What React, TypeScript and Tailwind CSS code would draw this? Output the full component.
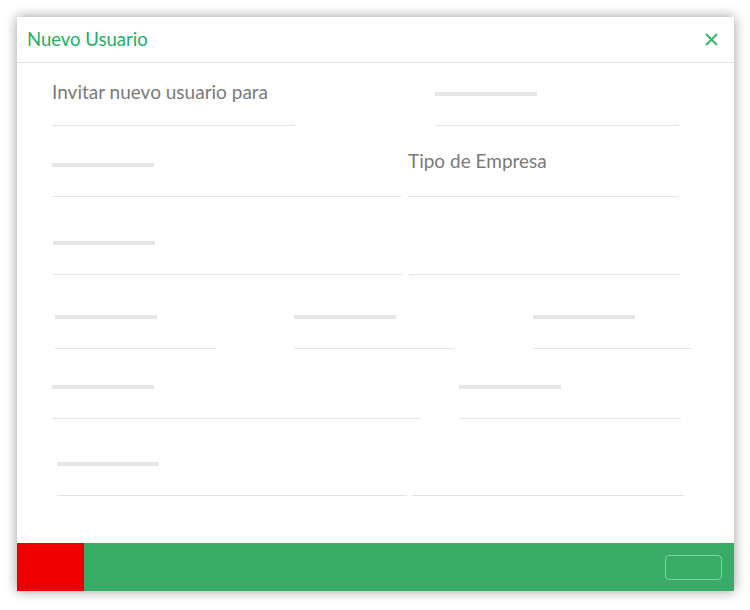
import React from "react";

type FieldProps = {
  width: string;
  label?: string;
  bar?: boolean;
  labelShift?: string;
};

function Field({ width, label, bar = true, labelShift = "" }: FieldProps) {
  return (
    <div className={`flex flex-col ${width}`}>
      <div className="flex h-[32px] items-center">
        {label ? (
          <span className={`text-[19px] text-[#7a7a7a] ${labelShift}`}>{label}</span>
        ) : bar ? (
          <div className="h-[4px] w-[102px] bg-[#e6e6e6]" />
        ) : null}
      </div>
      <div className="mt-[15px] h-px w-full bg-[#e3e3e3]" />
    </div>
  );
}

export default function App() {
  return (
    <main
      className="h-[610px] w-[750px] bg-white pl-[17px] pt-[17px]"
      style={{ fontFamily: "Lato, 'Open Sans', sans-serif" }}
    >
      <div className="flex h-[574px] w-[717px] flex-col bg-white shadow-[0_0_12px_rgba(0,0,0,0.4)]">
        <header className="flex h-[46px] items-center justify-between border-b border-[#e2e2e2] pl-[10px] pr-[16px]">
          <h2 className="text-[18.5px] text-[#1fae62]">Nuevo Usuario</h2>
          <button type="button" className="text-[#3cb371]">
            <svg width="13" height="13" viewBox="0 0 13 13">
              <path d="M1 1L12 12M12 1L1 12" stroke="currentColor" strokeWidth="2" />
            </svg>
          </button>
        </header>

        <section className="flex flex-1 flex-col pt-[15px]">
          <div className="flex pl-[35px]">
            <Field
              width="w-[243px]"
              label="Invitar nuevo usuario para"
              labelShift="-translate-y-[2px]"
            />
            <div className="ml-[140px]">
              <Field width="w-[244px]" />
            </div>
          </div>

          <div className="mt-[23px] flex pl-[35px]">
            <Field width="w-[349px]" />
            <div className="ml-[7px]">
              <Field
                width="w-[271px]"
                label="Tipo de Empresa"
                labelShift="-translate-y-[4px]"
              />
            </div>
          </div>

          <div className="mt-[30px] flex pl-[36px]">
            <Field width="w-[349px]" />
            <div className="ml-[7px]">
              <Field width="w-[271px]" bar={false} />
            </div>
          </div>

          <div className="mt-[26px] flex gap-[78px] pl-[38px]">
            <Field width="w-[161px]" />
            <Field width="w-[161px]" />
            <Field width="w-[159px]" />
          </div>

          <div className="mt-[22px] flex pl-[35px]">
            <Field width="w-[369px]" />
            <div className="ml-[38px]">
              <Field width="w-[222px]" />
            </div>
          </div>

          <div className="mt-[29px] flex pl-[40px]">
            <Field width="w-[350px]" />
            <div className="ml-[5px]">
              <Field width="w-[272px]" bar={false} />
            </div>
          </div>
        </section>

        <footer className="flex h-[48px] items-center bg-[#38ab66]">
          <div className="h-full w-[67px] bg-[#ee0000]" />
          <div className="flex-1" />
          <button
            type="button"
            className="mr-[12px] h-[25px] w-[57px] rounded-[4px] border border-white/40"
          />
        </footer>
      </div>
    </main>
  );
}
